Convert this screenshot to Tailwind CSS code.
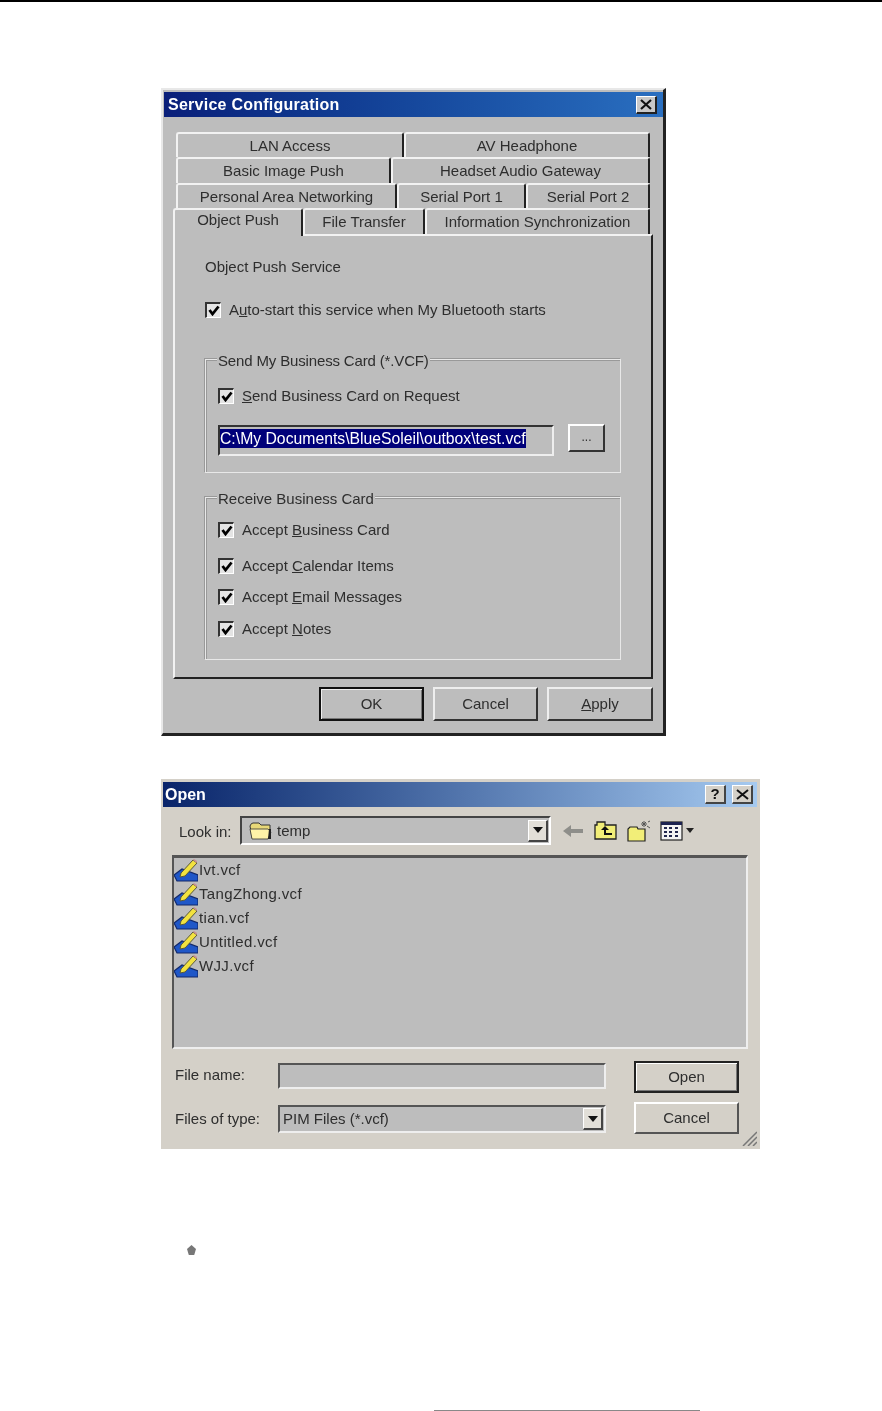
<!DOCTYPE html>
<html lang="en">
<head>
  <meta charset="UTF-8" />
  <meta name="viewport" content="width=device-width, initial-scale=1.0" />
  <title>Service Configuration</title>
  <script src="https://cdn.jsdelivr.net/npm/@tailwindcss/browser@4"></script>
</head>
<body class="bg-white h-[1411px] overflow-hidden font-['Liberation_Sans',sans-serif] text-[15px] leading-[20px] text-[#2e2e2e]">

  <div class="h-[2px] bg-black"></div>

  <!-- Service Configuration dialog -->
  <div class="blur-[0.35px] mt-[86px] ml-[161px] w-[505px] h-[648px] bg-[#bdbdbd] border-t-2 border-l-2 border-t-[#e8e8e8] border-l-[#e8e8e8] border-r-[3px] border-b-[3px] border-r-[#222] border-b-[#222]">
    <div class="mt-[2px] ml-[1px] w-[499px] h-[25px] pl-[4px] pr-[6px] flex items-center justify-between bg-gradient-to-r from-[#0a1f7a] to-[#2a6fc0]">
      <span class="text-white font-bold text-[16px] tracking-[0.25px]">Service Configuration</span>
      <span class="w-[21px] h-[18px] bg-[#c8c8c8] border-t border-l border-t-white border-l-white border-r-2 border-b-2 border-r-[#222] border-b-[#222] flex items-center justify-center">
        <svg width="12" height="11" viewBox="0 0 12 11"><path d="M1 1l10 9M11 1L1 10" stroke="#111" stroke-width="2.2" fill="none"/></svg>
      </span>
    </div>

    <!-- tabs -->
    <div class="mt-[15px] ml-[13px] w-[474px]">
      <div class="flex h-[25px]">
        <div class="w-[228px] flex items-center justify-center border-t-2 border-l-2 border-r-2 border-t-[#f2f2f2] border-l-[#f2f2f2] border-r-[#222] rounded-t-[3px]">LAN Access</div>
        <div class="w-[246px] flex items-center justify-center border-t-2 border-l-2 border-r-2 border-t-[#f2f2f2] border-l-[#f2f2f2] border-r-[#222] rounded-t-[3px]">AV Headphone</div>
      </div>
      <div class="flex h-[26px]">
        <div class="w-[215px] flex items-center justify-center border-t-2 border-l-2 border-r-2 border-t-[#f2f2f2] border-l-[#f2f2f2] border-r-[#222] rounded-t-[3px]">Basic Image Push</div>
        <div class="w-[259px] flex items-center justify-center border-t-2 border-l-2 border-r-2 border-t-[#f2f2f2] border-l-[#f2f2f2] border-r-[#222] rounded-t-[3px]">Headset Audio Gateway</div>
      </div>
      <div class="flex h-[25px]">
        <div class="w-[221px] flex items-center justify-center border-t-2 border-l-2 border-r-2 border-t-[#f2f2f2] border-l-[#f2f2f2] border-r-[#222] rounded-t-[3px]">Personal Area Networking</div>
        <div class="w-[129px] flex items-center justify-center border-t-2 border-l-2 border-r-2 border-t-[#f2f2f2] border-l-[#f2f2f2] border-r-[#222] rounded-t-[3px]">Serial Port 1</div>
        <div class="w-[124px] flex items-center justify-center border-t-2 border-l-2 border-r-2 border-t-[#f2f2f2] border-l-[#f2f2f2] border-r-[#222] rounded-t-[3px]">Serial Port 2</div>
      </div>
      <div class="flex items-end h-[26px] -ml-[3px] w-[477px]">
        <div class="relative z-10 -mb-[2px] w-[130px] h-[28px] pb-[6px] bg-[#bdbdbd] flex items-center justify-center border-t-2 border-l-2 border-r-2 border-t-[#f2f2f2] border-l-[#f2f2f2] border-r-[#222] rounded-t-[3px]">Object Push</div>
        <div class="w-[122px] h-[26px] flex items-center justify-center border-t-2 border-l-2 border-r-2 border-t-[#f2f2f2] border-l-[#f2f2f2] border-r-[#222] rounded-t-[3px]">File Transfer</div>
        <div class="w-[225px] h-[26px] flex items-center justify-center border-t-2 border-l-2 border-r-2 border-t-[#f2f2f2] border-l-[#f2f2f2] border-r-[#222] rounded-t-[3px]">Information Synchronization</div>
      </div>
    </div>

    <!-- panel -->
    <div class="ml-[10px] w-[480px] h-[445px] px-[30px] border-t-2 border-l-2 border-t-[#f2f2f2] border-l-[#f2f2f2] border-r-2 border-b-2 border-r-[#222] border-b-[#222]">
      <div class="mt-[21px] h-[20px]">Object Push Service</div>

      <div class="mt-[23px] h-[20px] flex items-center gap-[8px]">
        <span class="w-[16px] h-[16px] bg-[#e4e4e4] border-t-2 border-l-2 border-t-[#333] border-l-[#333] border-r border-b border-r-white border-b-white flex items-center justify-center">
          <svg width="12" height="11" viewBox="0 0 12 11"><path d="M1.500 5L4.500 9L10.500 1.500" stroke="#000" stroke-width="2.800" fill="none"/></svg>
        </span>
        <span>A<span class="underline">u</span>to-start this service when My Bluetooth starts</span>
      </div>

      <div class="relative mt-[39px] w-[416px] h-[114px] pt-[26px] pl-[12px] border border-[#e8e8e8] shadow-[inset_1px_1px_0_#999,-1px_-1px_0_#999]">
        <span class="absolute -top-[9px] left-[11px] px-[1px] bg-[#bdbdbd] tracking-[-0.15px]">Send My Business Card (*.VCF)</span>
        <div class="h-[20px] flex items-center gap-[8px]">
          <span class="w-[16px] h-[16px] bg-[#e4e4e4] border-t-2 border-l-2 border-t-[#333] border-l-[#333] border-r border-b border-r-white border-b-white flex items-center justify-center">
            <svg width="12" height="11" viewBox="0 0 12 11"><path d="M1.500 5L4.500 9L10.500 1.500" stroke="#000" stroke-width="2.800" fill="none"/></svg>
          </span>
          <span><span class="underline">S</span>end Business Card on Request</span>
        </div>
        <div class="mt-[19px] flex items-start gap-[14px]">
          <div class="w-[336px] h-[31px] pb-[4px] flex items-center border-t-2 border-l-2 border-t-[#333] border-l-[#333] border-r-2 border-b-2 border-r-[#eee] border-b-[#eee]">
            <span class="bg-[#00007a] text-white text-[15.750px] leading-[19px]">C:\My Documents\BlueSoleil\outbox\test.vcf</span>
          </div>
          <div class="w-[37px] h-[28px] -mt-[1px] pb-[2px] flex items-center justify-center text-[12px] border-t-2 border-l-2 border-t-white border-l-white border-r-2 border-b-2 border-r-[#333] border-b-[#333]">...</div>
        </div>
      </div>

      <div class="relative mt-[24px] w-[416px] h-[163px] pt-[22px] pl-[12px] border border-[#e8e8e8] shadow-[inset_1px_1px_0_#999,-1px_-1px_0_#999]">
        <span class="absolute -top-[9px] left-[11px] px-[1px] bg-[#bdbdbd]">Receive Business Card</span>
        <div class="h-[20px] flex items-center gap-[8px]">
          <span class="w-[16px] h-[16px] bg-[#e4e4e4] border-t-2 border-l-2 border-t-[#333] border-l-[#333] border-r border-b border-r-white border-b-white flex items-center justify-center">
            <svg width="12" height="11" viewBox="0 0 12 11"><path d="M1.500 5L4.500 9L10.500 1.500" stroke="#000" stroke-width="2.800" fill="none"/></svg>
          </span>
          <span>Accept <span class="underline">B</span>usiness Card</span>
        </div>
        <div class="mt-[16px] h-[20px] flex items-center gap-[8px]">
          <span class="w-[16px] h-[16px] bg-[#e4e4e4] border-t-2 border-l-2 border-t-[#333] border-l-[#333] border-r border-b border-r-white border-b-white flex items-center justify-center">
            <svg width="12" height="11" viewBox="0 0 12 11"><path d="M1.500 5L4.500 9L10.500 1.500" stroke="#000" stroke-width="2.800" fill="none"/></svg>
          </span>
          <span>Accept <span class="underline">C</span>alendar Items</span>
        </div>
        <div class="mt-[11px] h-[20px] flex items-center gap-[8px]">
          <span class="w-[16px] h-[16px] bg-[#e4e4e4] border-t-2 border-l-2 border-t-[#333] border-l-[#333] border-r border-b border-r-white border-b-white flex items-center justify-center">
            <svg width="12" height="11" viewBox="0 0 12 11"><path d="M1.500 5L4.500 9L10.500 1.500" stroke="#000" stroke-width="2.800" fill="none"/></svg>
          </span>
          <span>Accept <span class="underline">E</span>mail Messages</span>
        </div>
        <div class="mt-[12px] h-[20px] flex items-center gap-[8px]">
          <span class="w-[16px] h-[16px] bg-[#e4e4e4] border-t-2 border-l-2 border-t-[#333] border-l-[#333] border-r border-b border-r-white border-b-white flex items-center justify-center">
            <svg width="12" height="11" viewBox="0 0 12 11"><path d="M1.500 5L4.500 9L10.500 1.500" stroke="#000" stroke-width="2.800" fill="none"/></svg>
          </span>
          <span>Accept <span class="underline">N</span>otes</span>
        </div>
      </div>
    </div>

    <div class="mt-[8px] ml-[10px] w-[480px] flex justify-end gap-[9px]">
      <div class="w-[105px] h-[34px] flex items-center justify-center border-2 border-[#111] shadow-[inset_1px_1px_0_#eee,inset_-1px_-1px_0_#777]">OK</div>
      <div class="w-[105px] h-[34px] flex items-center justify-center border-t-2 border-l-2 border-t-[#eee] border-l-[#eee] border-r-2 border-b-2 border-r-[#333] border-b-[#333]">Cancel</div>
      <div class="w-[106px] h-[34px] flex items-center justify-center border-t-2 border-l-2 border-t-[#eee] border-l-[#eee] border-r-2 border-b-2 border-r-[#333] border-b-[#333]"><span><span class="underline">A</span>pply</span></div>
    </div>
  </div>

  <!-- Open dialog -->
  <div class="blur-[0.35px] relative mt-[43px] ml-[161px] w-[599px] h-[370px] bg-[#d4d0c8] pt-[3px] pl-[2px]">
    <div class="w-[594px] h-[25px] pl-[2px] pr-[4px] flex items-center justify-between bg-gradient-to-r from-[#0a246a] to-[#a6caf0]">
      <span class="text-white font-bold text-[16px]">Open</span>
      <div class="flex gap-[6px]">
        <span class="w-[21px] h-[19px] bg-[#d4d0c8] border-t border-l border-t-white border-l-white border-r-2 border-b-2 border-r-[#444] border-b-[#444] flex items-center justify-center font-bold text-[15px] text-[#111]">?</span>
        <span class="w-[21px] h-[19px] bg-[#d4d0c8] border-t border-l border-t-white border-l-white border-r-2 border-b-2 border-r-[#444] border-b-[#444] flex items-center justify-center">
          <svg width="13" height="11" viewBox="0 0 13 11"><path d="M1 1l11 9M12 1L1 10" stroke="#111" stroke-width="2" fill="none"/></svg>
        </span>
      </div>
    </div>

    <!-- look in row -->
    <div class="mt-[9px] flex items-center h-[29px]">
      <span class="ml-[16px] w-[61px] mt-[3px]">Look in:</span>
      <div class="w-[311px] h-[29px] pl-[6px] pr-[1px] flex items-center bg-[#bdbdbd] border-t-2 border-l-2 border-t-[#444] border-l-[#444] border-r-2 border-b-2 border-r-white border-b-white">
        <svg width="26" height="20" viewBox="0 0 26 20"><path d="M2 5q1-3 3-3h6l2 2h9v13H4z" fill="#e8d878" stroke="#333"/><path d="M2 8h18l3 3-3 7H4z" fill="#fff3a8" stroke="#333" stroke-width=".8"/><path d="M21 8h2v10h-3z" fill="#222"/></svg>
        <span class="ml-[3px] mt-[1px] flex-1">temp</span>
        <span class="w-[20px] h-[22px] bg-[#e2dfd8] border-t border-l border-t-white border-l-white border-r-2 border-b-2 border-r-[#444] border-b-[#444] flex items-center justify-center">
          <svg width="10" height="6" viewBox="0 0 10 6"><path d="M0 0h10L5 6z" fill="#111"/></svg>
        </span>
      </div>
      <!-- toolbar -->
      <svg class="ml-[12px]" width="20" height="14" viewBox="0 0 20 14"><path d="M0 7l8-6v4h12v4H8v4z" fill="#8e8e8a"/></svg>
      <svg class="ml-[11px]" width="23" height="19" viewBox="0 0 23 19"><path d="M1 18V4h2V1h8v3h11v14z" fill="#f2ee78" stroke="#222" stroke-width="1.300"/><path d="M11 5l-4 4h3v5h8v-2h-6V9h3z" fill="#111"/></svg>
      <svg class="ml-[10px]" width="24" height="22" viewBox="0 0 24 22"><path d="M1 21V9l2-2h7l1 2h7v12z" fill="#f2ee78" stroke="#222" stroke-width="1.200"/><path d="M17 1v6M14 4h6M15 2l4 4M19 2l-4 4M20 6l3 2M21 2l2-1" stroke="#555" stroke-width="1" fill="none"/></svg>
      <svg class="ml-[9px]" width="23" height="20" viewBox="0 0 23 20"><rect x="1" y="1" width="21" height="18" fill="#f4f4f4" stroke="#222" stroke-width="1.200"/><rect x="1" y="1" width="21" height="3" fill="#1c2250"/><path d="M4 7h3M9 7h3M15 7h3M4 11h3M9 11h3M15 11h3M4 15h3M9 15h3M15 15h3" stroke="#23284f" stroke-width="2"/></svg>
      <svg class="ml-[3px]" width="8" height="5" viewBox="0 0 8 5"><path d="M0 0h8L4 5z" fill="#222"/></svg>
    </div>

    <!-- file list -->
    <div class="mt-[10px] ml-[9px] w-[576px] h-[194px] bg-[#bdbdbd] border-t-[3px] border-l-2 border-t-[#555] border-l-[#555] border-r-2 border-b-2 border-r-[#eee] border-b-[#eee] tracking-[0.35px]">
      <div class="h-[24px] flex items-center gap-[1px]">
        <svg width="24" height="24" viewBox="0 0 24 24"><path d="M0 17L8 11L24 17V23H3z" fill="#1f57c8" stroke="#12296a" stroke-width="1.200"/><path d="M7 15L19 2l4 3L11 18l-5 1z" fill="#f2e23f" stroke="#5a5a3a" stroke-width="1"/><path d="M19 2l1-1 3 2-0.500 2z" fill="#c9908f"/></svg>
        <span>Ivt.vcf</span>
      </div>
      <div class="h-[24px] flex items-center gap-[1px]">
        <svg width="24" height="24" viewBox="0 0 24 24"><path d="M0 17L8 11L24 17V23H3z" fill="#1f57c8" stroke="#12296a" stroke-width="1.200"/><path d="M7 15L19 2l4 3L11 18l-5 1z" fill="#f2e23f" stroke="#5a5a3a" stroke-width="1"/><path d="M19 2l1-1 3 2-0.500 2z" fill="#c9908f"/></svg>
        <span>TangZhong.vcf</span>
      </div>
      <div class="h-[24px] flex items-center gap-[1px]">
        <svg width="24" height="24" viewBox="0 0 24 24"><path d="M0 17L8 11L24 17V23H3z" fill="#1f57c8" stroke="#12296a" stroke-width="1.200"/><path d="M7 15L19 2l4 3L11 18l-5 1z" fill="#f2e23f" stroke="#5a5a3a" stroke-width="1"/><path d="M19 2l1-1 3 2-0.500 2z" fill="#c9908f"/></svg>
        <span>tian.vcf</span>
      </div>
      <div class="h-[24px] flex items-center gap-[1px]">
        <svg width="24" height="24" viewBox="0 0 24 24"><path d="M0 17L8 11L24 17V23H3z" fill="#1f57c8" stroke="#12296a" stroke-width="1.200"/><path d="M7 15L19 2l4 3L11 18l-5 1z" fill="#f2e23f" stroke="#5a5a3a" stroke-width="1"/><path d="M19 2l1-1 3 2-0.500 2z" fill="#c9908f"/></svg>
        <span>Untitled.vcf</span>
      </div>
      <div class="h-[24px] flex items-center gap-[1px]">
        <svg width="24" height="24" viewBox="0 0 24 24"><path d="M0 17L8 11L24 17V23H3z" fill="#1f57c8" stroke="#12296a" stroke-width="1.200"/><path d="M7 15L19 2l4 3L11 18l-5 1z" fill="#f2e23f" stroke="#5a5a3a" stroke-width="1"/><path d="M19 2l1-1 3 2-0.500 2z" fill="#c9908f"/></svg>
        <span>WJJ.vcf</span>
      </div>
    </div>

    <!-- bottom fields -->
    <div class="mt-[12px] ml-[12px] flex">
      <div class="w-[431px] pt-[2px]">
        <div class="flex items-center h-[26px]">
          <span class="w-[103px] -mt-[3px]">File name:</span>
          <div class="w-[328px] h-[26px] bg-[#bdbdbd] border-t-2 border-l-2 border-t-[#555] border-l-[#555] border-r-2 border-b-2 border-r-[#eee] border-b-[#eee]"></div>
        </div>
        <div class="mt-[16px] flex items-center h-[28px]">
          <span class="w-[103px]">Files of type:</span>
          <div class="w-[328px] h-[28px] pl-[3px] pr-[1px] flex items-center bg-[#bdbdbd] border-t-2 border-l-2 border-t-[#555] border-l-[#555] border-r-2 border-b-2 border-r-[#eee] border-b-[#eee]">
            <span class="flex-1">PIM Files (*.vcf)</span>
            <span class="w-[20px] h-[22px] bg-[#e2dfd8] border-t border-l border-t-white border-l-white border-r-2 border-b-2 border-r-[#444] border-b-[#444] flex items-center justify-center">
              <svg width="10" height="6" viewBox="0 0 10 6"><path d="M0 0h10L5 6z" fill="#111"/></svg>
            </span>
          </div>
        </div>
      </div>
      <div class="ml-[28px] w-[105px]">
        <div class="h-[32px] flex items-center justify-center border-2 border-[#222] shadow-[inset_1px_1px_0_#fff,inset_-1px_-1px_0_#777]">Open</div>
        <div class="mt-[9px] h-[32px] flex items-center justify-center border-t-2 border-l-2 border-t-white border-l-white border-r-2 border-b-2 border-r-[#555] border-b-[#555]">Cancel</div>
      </div>
    </div>

    <svg class="absolute right-[3px] bottom-[3px]" width="15" height="15" viewBox="0 0 15 15"><path d="M1 15L15 1M6 15l9-9M11 15l4-4" stroke="#777" stroke-width="1.500" fill="none"/></svg>
  </div>

  <!-- stray bullet and footer rule -->
  <div class="mt-[96px] ml-[187px] w-[9px] h-[10px] bg-[#777] [clip-path:polygon(50%_0,100%_40%,80%_100%,20%_100%,0_40%)]"></div>
  <div class="mt-[155px] ml-[434px] w-[266px] h-[1px] bg-[#888]"></div>

</body>
</html>
